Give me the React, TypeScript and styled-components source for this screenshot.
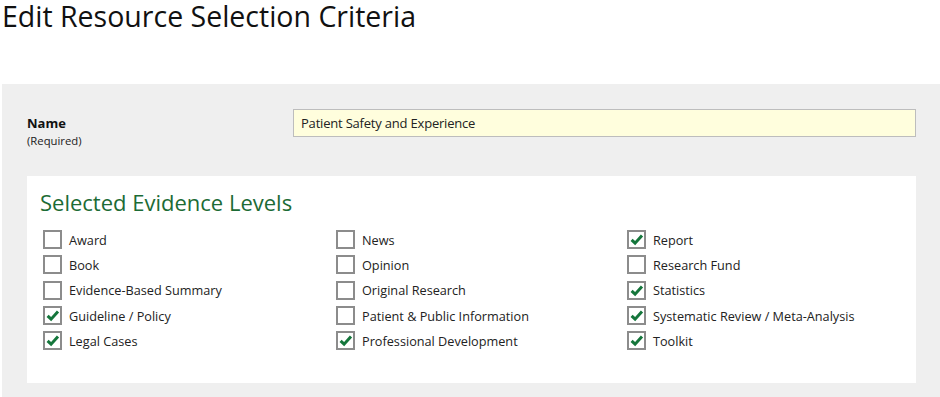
import styled, { createGlobalStyle } from "styled-components"

type Level = {
  label: string
  checked: boolean
}

const columns: Level[][] = [
  [
    { label: "Award", checked: false },
    { label: "Book", checked: false },
    { label: "Evidence-Based Summary", checked: false },
    { label: "Guideline / Policy", checked: true },
    { label: "Legal Cases", checked: true },
  ],
  [
    { label: "News", checked: false },
    { label: "Opinion", checked: false },
    { label: "Original Research", checked: false },
    { label: "Patient & Public Information", checked: false },
    { label: "Professional Development", checked: true },
  ],
  [
    { label: "Report", checked: true },
    { label: "Research Fund", checked: false },
    { label: "Statistics", checked: true },
    { label: "Systematic Review / Meta-Analysis", checked: true },
    { label: "Toolkit", checked: true },
  ],
]

const GlobalStyle = createGlobalStyle`
  html, body {
    margin: 0;
    padding: 0;
    background: #ffffff;
    font-family: "Open Sans", "Noto Sans", sans-serif;
    color: #222222;
  }
`

const Check = () => (
  <svg width="19" height="19" viewBox="0 0 19 19">
    <path d="M4.6 9.8 L8.1 13.2 L15 5.6" fill="none" stroke="#14763b" strokeWidth="3" strokeLinecap="butt" strokeLinejoin="miter" />
  </svg>
)

export default function App() {
  return (
    <Page>
      <GlobalStyle />
      <Title>Edit Resource Selection Criteria</Title>
      <Panel>
        <NameRow>
          <LabelBlock>
            <FieldLabel>Name</FieldLabel>
            <Hint>(Required)</Hint>
          </LabelBlock>
          <NameInput defaultValue="Patient Safety and Experience" />
        </NameRow>
        <Card>
          <CardTitle>Selected Evidence Levels</CardTitle>
          <Grid>
            {columns.map((col, i) => (
              <Column key={i}>
                {col.map((item) => (
                  <Option key={item.label}>
                    <Box>{item.checked && <Check />}</Box>
                    <OptionText>{item.label}</OptionText>
                  </Option>
                ))}
              </Column>
            ))}
          </Grid>
        </Card>
      </Panel>
    </Page>
  )
}

const Page = styled.div`
  padding-left: 2px;
`

const Title = styled.h1`
  margin: 0;
  height: 84px;
  font-size: 28.5px;
  font-weight: 400;
  line-height: 33px;
  color: #111111;
  white-space: nowrap;
`

const Panel = styled.div`
  background: #efefef;
  padding: 25px 24px 14px 25px;
`

const NameRow = styled.div`
  display: flex;
  align-items: flex-start;
  height: 67px;
`

const LabelBlock = styled.div`
  width: 266px;
  padding-top: 5px;
  display: flex;
  flex-direction: column;
`

const FieldLabel = styled.span`
  font-size: 13px;
  font-weight: 700;
  line-height: 18px;
  color: #111111;
`

const Hint = styled.span`
  font-size: 11.3px;
  line-height: 17px;
  color: #222222;
`

const NameInput = styled.input`
  flex: 1;
  height: 28px;
  box-sizing: border-box;
  border: 1px solid #bdbdbd;
  background: #fffedd;
  padding: 0 7px;
  font-family: "Open Sans", sans-serif;
  font-size: 13px;
  letter-spacing: -0.2px;
  color: #222222;
  outline: none;
`

const Card = styled.div`
  background: #ffffff;
  padding: 12px 13px 30px 13px;
`

const CardTitle = styled.h2`
  margin: 0 0 11px 0;
  font-size: 22px;
  font-weight: 400;
  line-height: 28px;
  color: #1c6b35;
`

const Grid = styled.div`
  display: grid;
  grid-template-columns: 293px 291px 1fr;
  padding-left: 3px;
`

const Column = styled.div`
  display: flex;
  flex-direction: column;
`

const Option = styled.label`
  display: flex;
  align-items: center;
  height: 25.3px;
  gap: 7px;
`

const Box = styled.span`
  width: 19px;
  height: 19px;
  box-sizing: border-box;
  border: 2px solid #8c8c8c;
  display: flex;
  align-items: center;
  justify-content: center;
  & svg {
    flex: none;
  }
`

const OptionText = styled.span`
  font-size: 12.7px;
  line-height: 18px;
  color: #222222;
`
